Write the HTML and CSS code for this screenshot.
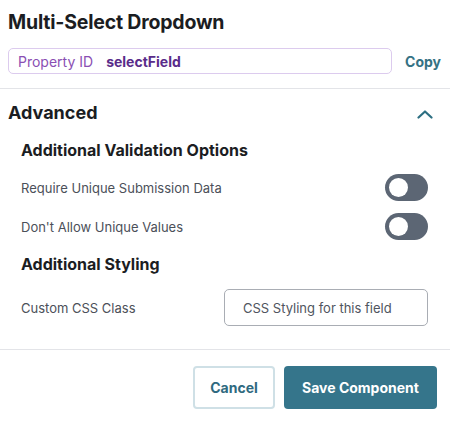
FILE: index.html
```html
<!DOCTYPE html>
<html>
<head>
<meta charset="utf-8">
<link rel="stylesheet" href="styles.css">
</head>
<body>
<div class="panel">
  <div class="head">
    <h1 class="title">Multi-Select Dropdown</h1>
    <div class="prop-row">
      <div class="prop-box">
        <span class="prop-label">Property ID</span>
        <span class="prop-value">selectField</span>
      </div>
      <span class="copy">Copy</span>
    </div>
  </div>
  <div class="divider"></div>
  <div class="section">
    <div class="section-head">
      <h2 class="section-title">Advanced</h2>
      <svg class="chevron" width="16" height="9" viewBox="0 0 16 9"><path d="M1.5 7.5 L8 1.5 L14.5 7.5" fill="none" stroke="#2d6f82" stroke-width="2.2" stroke-linecap="round" stroke-linejoin="round"/></svg>
    </div>
    <div class="group">
      <h3 class="group-title">Additional Validation Options</h3>
      <div class="row">
        <span class="row-label">Require Unique Submission Data</span>
        <span class="toggle"><span class="knob"></span></span>
      </div>
      <div class="row row-2">
        <span class="row-label">Don't Allow Unique Values</span>
        <span class="toggle"><span class="knob"></span></span>
      </div>
      <h3 class="group-title group-title-2">Additional Styling</h3>
      <div class="row row-input">
        <span class="row-label">Custom CSS Class</span>
        <div class="text-input">CSS Styling for this field</div>
      </div>
    </div>
  </div>
  <div class="divider divider-2"></div>
  <div class="footer">
    <button class="btn btn-cancel">Cancel</button>
    <button class="btn btn-save">Save Component</button>
  </div>
</div>
</body>
</html>
```
FILE: styles.css
```css
* { box-sizing: border-box; }
html, body { margin: 0; padding: 0; background: #ffffff; }
body { font-family: Inter, "Noto Sans", sans-serif; color: #1d1f24; width: 450px; height: 421px; overflow: hidden; }
.panel { display: flex; flex-direction: column; }
.head { padding: 9px 9px 0 8px; }
.title { margin: 0; font-size: 19.5px; font-weight: 700; line-height: 26px; color: #1b1d22; letter-spacing: -0.2px; }
.prop-row { display: flex; align-items: center; justify-content: space-between; margin-top: 13px; }
.prop-box { width: 384px; height: 26px; border: 1px solid #dccbee; border-radius: 5px; display: flex; align-items: center; padding-left: 9px; }
.prop-label { font-size: 14px; color: #8a4fb3; }
.prop-value { font-size: 14px; font-weight: 700; color: #5a2c8a; margin-left: 13px; }
.copy { font-size: 14px; font-weight: 700; color: #357284; }
.divider { height: 1px; background: #e3e4e8; margin-top: 14px; }
.section { padding: 0 17px 0 8px; }
.section-head { display: flex; align-items: center; justify-content: space-between; margin-top: 12px; height: 24px; }
.section-title { margin: 0; font-size: 18px; font-weight: 700; line-height: 24px; color: #1b1d22; }
.chevron { margin-top: 2px; }
.group { padding-left: 13px; padding-right: 5px; }
.group-title { margin: 14px 0 0; font-size: 16px; font-weight: 700; line-height: 22px; color: #1b1d22; }
.row { display: flex; align-items: center; justify-content: space-between; margin-top: 13px; height: 27px; }
.row-2 { margin-top: 12px; }
.row-label { font-size: 13px; color: #4b5059; }
.toggle { width: 43px; height: 27px; border-radius: 14px; background: #5c6674; position: relative; display: inline-block; }
.knob { position: absolute; left: 4px; top: 4px; width: 19px; height: 19px; border-radius: 50%; background: #ffffff; }
.group-title-2 { margin-top: 13px; }
.row-input { margin-top: 14px; height: 37px; }
.text-input { width: 204px; height: 37px; border: 1px solid #a9adb4; border-radius: 5px; font-size: 13px; color: #4f5560; display: flex; align-items: center; padding-left: 18px; }
.divider-2 { margin-top: 23px; background: #e3e4e8; }
.footer { display: flex; justify-content: flex-end; gap: 9px; padding: 16px 13px 0 0; }
.btn { font-family: Inter, "Noto Sans", sans-serif; font-size: 14px; font-weight: 700; height: 43px; border-radius: 4px; cursor: pointer; }
.btn-cancel { width: 82px; background: #ffffff; border: 2px solid #cfe0e6; color: #2f6a80; }
.btn-save { width: 153px; background: #35758b; border: none; color: #ffffff; }
```
